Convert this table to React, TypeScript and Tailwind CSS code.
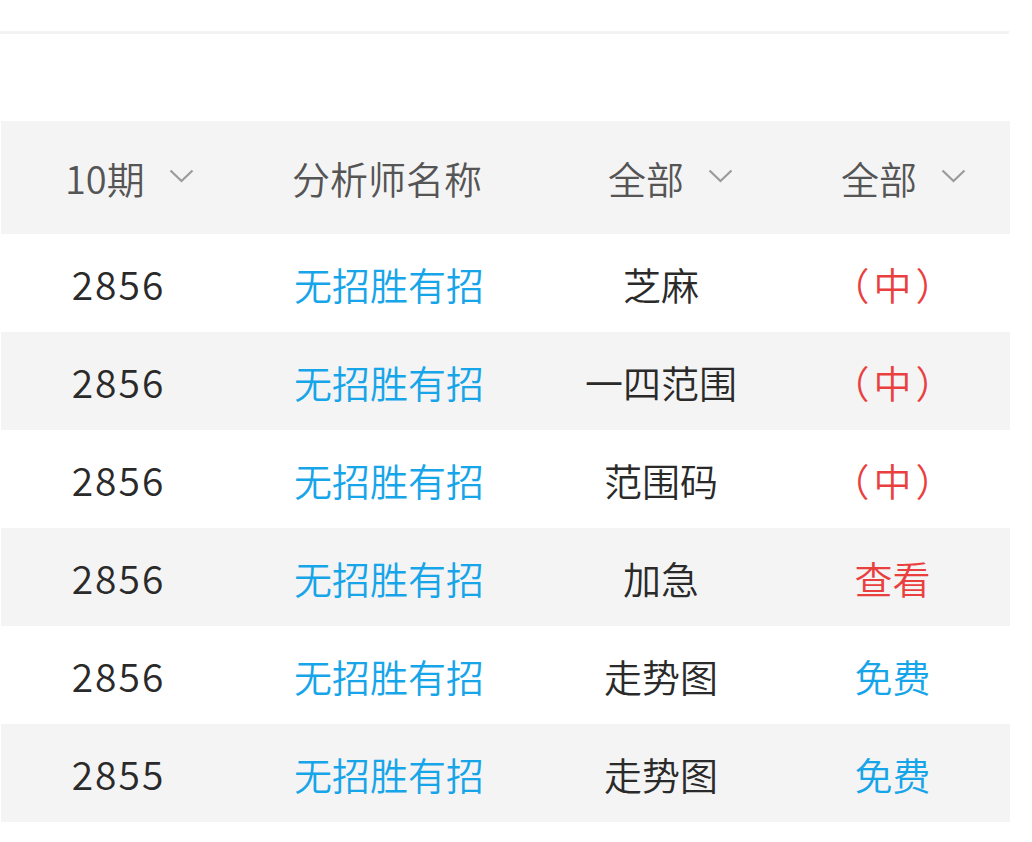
type Row = { issue: string; analyst: string; kind: string; tag: string; tagColor: "red" | "blue" };

const rows: Row[] = [
    { issue: "2856", analyst: "无招胜有招", kind: "芝麻", tag: "（中）", tagColor: "red" },
    { issue: "2856", analyst: "无招胜有招", kind: "一四范围", tag: "（中）", tagColor: "red" },
    { issue: "2856", analyst: "无招胜有招", kind: "范围码", tag: "（中）", tagColor: "red" },
    { issue: "2856", analyst: "无招胜有招", kind: "加急", tag: "查看", tagColor: "red" },
    { issue: "2856", analyst: "无招胜有招", kind: "走势图", tag: "免费", tagColor: "blue" },
    { issue: "2855", analyst: "无招胜有招", kind: "走势图", tag: "免费", tagColor: "blue" },
];

function Chevron() {
    return (
        <svg width="25" height="14" viewBox="0 0 25 14" fill="none" className="mt-[-4px]">
            <polyline points="1.5,1.5 12.5,12 23.5,1.5" stroke="#9b9b9b" strokeWidth="2.2" />
        </svg>
    );
}

function HeaderDrop({ label }: { label: string }) {
    return (
        <div className="flex items-center gap-[24px]">
            <span>{label}</span>
            <Chevron />
        </div>
    );
}

export default function App() {
    return (
        <div
            className="w-[1032px] h-[842px] bg-white overflow-hidden font-[350]"
            style={{ fontFamily: '"Noto Sans CJK SC", "Noto Sans", sans-serif' }}>
            {/* top tabs, cut off by the screen edge */}
            <div className="h-[31px] overflow-hidden">
                <div className="flex gap-[90px] pl-[324px] -mt-[35px] text-[30px] leading-[34px] text-[#d0d0d0]">
                    <span>精选推荐</span>
                    <span>高手资料</span>
                </div>
            </div>
            <div className="w-[1009px] h-[3px] bg-[#f3f3f3]" />

            <section className="pt-[87px] w-[1009px] ml-px">
                <div className="grid grid-cols-[234px_308px_234px_1fr] h-[113px] bg-[#f4f4f4] items-center text-[38px] text-[#555555]">
                    <div className="pl-[64px]">
                        <HeaderDrop label="10期" />
                    </div>
                    <div className="pl-[57px]">分析师名称</div>
                    <div className="pl-[65px]">
                        <HeaderDrop label="全部" />
                    </div>
                    <div className="pl-[64px]">
                        <HeaderDrop label="全部" />
                    </div>
                </div>

                {rows.map((row, i) => (
                    <div
                        key={i}
                        className={
                            "grid grid-cols-[234px_308px_234px_1fr] h-[98px] items-center text-[38px] " +
                            (i % 2 === 1 ? "bg-[#f4f4f4]" : "bg-white")
                        }>
                        <div className="text-center text-[#2a2a2a] text-[39px] tracking-[2px] pl-[1px]">{row.issue}</div>
                        <div className="text-center text-[#17a5e9]">{row.analyst}</div>
                        <div className="text-center text-[#2a2a2a] pl-[2px]">{row.kind}</div>
                        <div
                            className={
                                "text-center " +
                                (row.tag === "（中）" ? "tracking-[4px] pl-[2px] " : "pr-[2px] ") +
                                (row.tagColor === "red" ? "text-[#ea3f3f]" : "text-[#17a5e9]")
                            }>
                            {row.tag}
                        </div>
                    </div>
                ))}
            </section>
        </div>
    );
}
